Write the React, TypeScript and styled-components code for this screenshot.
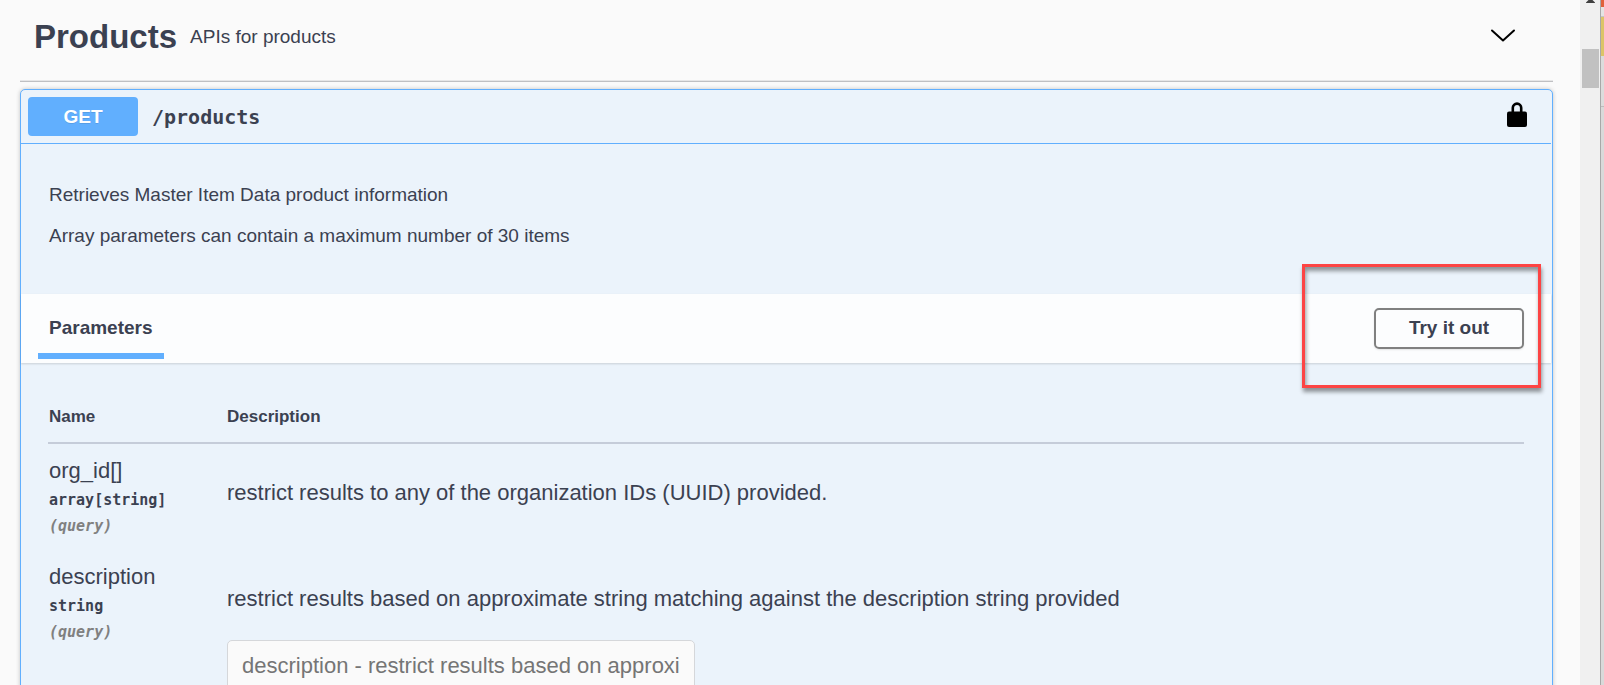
import React from "react";
import styled, { createGlobalStyle } from "styled-components";

const sans = `"Liberation Sans", Arial, sans-serif`;
const mono = `"DejaVu Sans Mono", Consolas, monospace`;
const ink = "#3b4151";
const blue = "#61affe";

const GlobalStyle = createGlobalStyle`
  *, *::before, *::after { box-sizing: border-box; }
  body { margin: 0; background: #fafafa; color: ${ink}; font-family: ${sans}; }
`;

const Page = styled.div`
  display: flex;
  height: 100vh;
  overflow: hidden;
`;

const Content = styled.main`
  flex: 1;
  min-width: 0;
  padding: 0 27px 0 20px;
`;

const TagHeader = styled.header`
  display: flex;
  align-items: center;
  height: 82px;
  padding: 0 35px 8px 14px;
  border-bottom: 1px solid #bfc0c3;
  box-shadow: inset 0 -1px 0 #e6e6e7;
`;

const TagTitle = styled.h1`
  margin: 0 13px 0 0;
  font-size: 33px;
  line-height: 40px;
`;

const TagSummary = styled.p`
  flex: 1;
  margin: 0;
  font-size: 19px;
  line-height: 24px;
`;

const IconButton = styled.button`
  display: flex;
  padding: 0;
  border: 0;
  background: none;
  color: #000;
  cursor: pointer;
`;

const Operation = styled.section`
  margin-top: 7px;
  border: 1px solid ${blue};
  border-radius: 5px;
  background: #ebf3fb;
  box-shadow: 0 0 4px rgba(0, 0, 0, 0.22);
`;

const OperationSummary = styled.div`
  display: flex;
  align-items: center;
  height: 54px;
  margin-right: 1px;
  padding: 0 22px 0 7px;
  border-bottom: 1px solid ${blue};
`;

const Method = styled.span`
  width: 110px;
  margin-right: 14px;
  border-radius: 4px;
  background: ${blue};
  color: #fff;
  font-size: 19px;
  font-weight: 700;
  line-height: 39px;
  text-align: center;
  text-shadow: 0 1px 0 rgba(0, 0, 0, 0.1);
`;

const Path = styled.span`
  flex: 1;
  font-family: ${mono};
  font-size: 20px;
  font-weight: 700;
  line-height: 24px;
`;

const Summary = styled.div`
  padding: 39px 28px 46px;
`;

const Paragraph = styled.p`
  margin: 0;
  font-size: 19px;
  line-height: 24px;

  & + & {
    margin-top: 17px;
  }
`;

const SectionHeader = styled.div`
  display: flex;
  align-items: center;
  justify-content: space-between;
  height: 69px;
  margin-right: 1px;
  padding: 0 27px 0 17px;
  background: #fcfdfe;
  box-shadow: 0 1px 2px rgba(0, 0, 0, 0.15);
`;

const Tab = styled.h2`
  align-self: flex-end;
  margin: 0 0 4px;
  padding: 0 11px 14px;
  border-bottom: 6px solid ${blue};
  font-size: 19px;
  line-height: 22px;
`;

const TryIt = styled.div`
  position: relative;
`;

const TryButton = styled.button`
  display: block;
  width: 150px;
  height: 41px;
  padding: 0 0 2px;
  border: 2px solid #808080;
  border-radius: 5px;
  background: transparent;
  box-shadow: 0 1px 2px rgba(0, 0, 0, 0.1);
  color: ${ink};
  font: 700 19px ${sans};
  cursor: pointer;
`;

const Highlight = styled.div`
  position: absolute;
  inset: -44px -17px -39px -72px;
  border: 3px solid #fd4444;
  box-shadow: 1px 4px 4px rgba(0, 0, 0, 0.4), inset 1px 4px 4px rgba(0, 0, 0, 0.4);
  pointer-events: none;
`;

const TableArea = styled.div`
  padding: 40px 28px 30px 27px;
`;

const Table = styled.table`
  width: 100%;
  border-collapse: collapse;
  table-layout: fixed;
`;

const HeadCell = styled.th<{ $width?: number }>`
  width: ${({ $width }) => ($width ? `${$width}px` : "auto")};
  padding: 3px 0 14px 1px;
  border-bottom: 2px solid #c5ccd9;
  font-size: 17px;
  line-height: 22px;
  text-align: left;
`;

const Cell = styled.td`
  padding: 13px 0 12px 1px;
  vertical-align: top;
`;

const ParamName = styled.label`
  display: block;
  font-size: 22px;
  line-height: 28px;
`;

const ParamType = styled.div`
  padding-top: 3px;
  font-family: ${mono};
  font-size: 15px;
  font-weight: 700;
  line-height: 24px;
`;

const ParamIn = styled.div`
  padding-top: 2px;
  color: #808080;
  font-family: ${mono};
  font-size: 15px;
  font-style: italic;
  font-weight: 700;
  line-height: 24px;
`;

const ParamText = styled.p`
  margin: 22px 0 0;
  font-size: 22px;
  line-height: 28px;
`;

const ParamInput = styled.input`
  display: block;
  width: 468px;
  height: 52px;
  margin-top: 27px;
  padding: 0 14px;
  border: 1px solid #d5d7da;
  border-radius: 5px;
  background: #fafafa;
  color: ${ink};
  font: 22px ${sans};

  &::placeholder {
    color: #757575;
  }
`;

const ScrollTrack = styled.div`
  width: 20px;
  padding: 0 1px 0 2px;
  background: #f0f0f0;
`;

const ScrollUp = styled.svg`
  display: block;
  margin: 0 auto 46px;
`;

const ScrollThumb = styled.div`
  height: 39px;
  background: #c1c1c1;
`;

const BackWindow = styled.div`
  width: 4px;
  border-left: 1px solid #a8a8a8;
  background: #d9d9d9;
`;

const Swatch = styled.div<{ $height: number; $color: string }>`
  height: ${({ $height }) => $height}px;
  background: ${({ $color }) => $color};
`;

const params = [
  {
    name: "org_id[]",
    type: "array[string]",
    text: "restrict results to any of the organization IDs (UUID) provided.",
  },
  {
    name: "description",
    type: "string",
    text: "restrict results based on approximate string matching against the description string provided",
    placeholder: "description - restrict results based on approximate string matching",
  },
];

export default function App() {
  return (
    <>
      <GlobalStyle />
      <Page>
        <Content>
          <TagHeader>
            <TagTitle>Products</TagTitle>
            <TagSummary>APIs for products</TagSummary>
            <IconButton aria-label="Collapse Products">
              <svg width="30" height="22" viewBox="0 0 30 22" fill="none" stroke="currentColor" strokeWidth="2" strokeLinecap="round" strokeLinejoin="round">
                <path d="M4 4.500 15 14.500 26 4.500" />
              </svg>
            </IconButton>
          </TagHeader>
          <Operation>
            <OperationSummary>
              <Method>GET</Method>
              <Path>/products</Path>
              <IconButton aria-label="Authorize">
                <svg width="24" height="30" viewBox="0 0 24 30">
                  <path d="M7.800 11V5.800a4.200 4.200 0 0 1 8.400 0V11" fill="none" stroke="currentColor" strokeWidth="2.600" />
                  <rect x="2" y="9.500" width="20" height="15.500" rx="2" fill="currentColor" />
                </svg>
              </IconButton>
            </OperationSummary>
            <Summary>
              <Paragraph>Retrieves Master Item Data product information</Paragraph>
              <Paragraph>Array parameters can contain a maximum number of 30 items</Paragraph>
            </Summary>
            <SectionHeader>
              <Tab>Parameters</Tab>
              <TryIt>
                <TryButton>Try it out</TryButton>
                <Highlight />
              </TryIt>
            </SectionHeader>
            <TableArea>
              <Table>
                <thead>
                  <tr>
                    <HeadCell $width={178}>Name</HeadCell>
                    <HeadCell>Description</HeadCell>
                  </tr>
                </thead>
                <tbody>
                  {params.map((p) => (
                    <tr key={p.name}>
                      <Cell>
                        <ParamName as={p.placeholder ? "label" : "div"} htmlFor={p.placeholder ? p.name : undefined}>
                          {p.name}
                        </ParamName>
                        <ParamType>{p.type}</ParamType>
                        <ParamIn>(query)</ParamIn>
                      </Cell>
                      <Cell>
                        <ParamText>{p.text}</ParamText>
                        {p.placeholder && <ParamInput id={p.name} placeholder={p.placeholder} />}
                      </Cell>
                    </tr>
                  ))}
                </tbody>
              </Table>
            </TableArea>
          </Operation>
        </Content>
        <ScrollTrack>
          <ScrollUp width="9" height="3" viewBox="0 0 9 3">
            <path d="M2.500 0h4L9 2.500V3H0v-.5z" fill="#404040" />
          </ScrollUp>
          <ScrollThumb />
        </ScrollTrack>
        <BackWindow>
          <Swatch $height={7} $color="#e0603a" />
          <Swatch $height={9} $color="#e4e4e4" />
          <Swatch $height={1} $color="#c4c4c4" />
          <Swatch $height={39} $color="#dcc468" />
          <Swatch $height={50} $color="#dcdcdc" />
          <Swatch $height={1} $color="#bcbcbc" />
        </BackWindow>
      </Page>
    </>
  );
}
